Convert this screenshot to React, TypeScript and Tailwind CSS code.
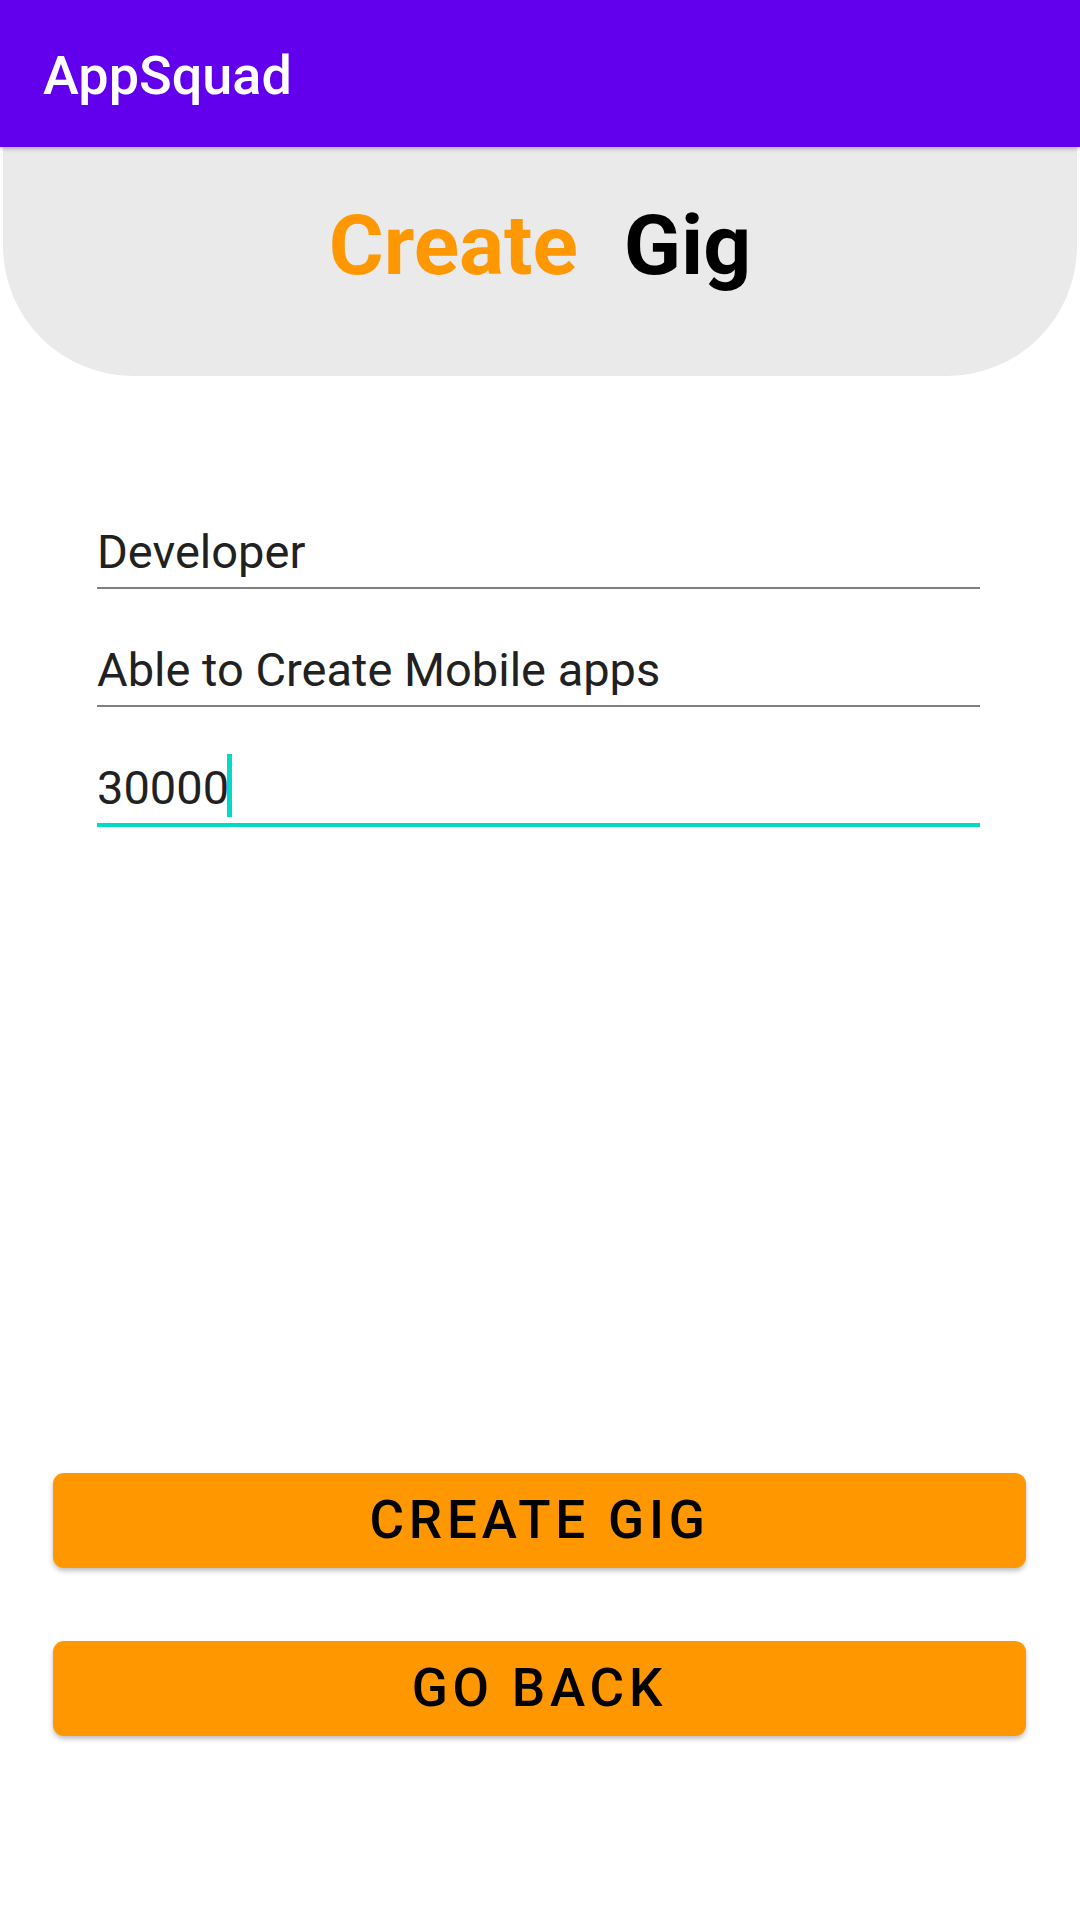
import React from 'react';

const fields = [
    { value: 'Developer', focused: false },
    { value: 'Able to Create Mobile apps', focused: false },
    { value: '30000', focused: true },
];

function Field({ value, focused }: { value: string, focused: boolean }) {
    return (
        <div className={`pb-[12px] ${focused ? 'border-b-[4px] border-[#03DAC5]' : 'border-b-2 border-[#7f7f7f]'}`}>
            <div className="text-[47px] leading-[47px] text-[#212121]">
                <span className="relative">
                    {value}
                    {focused && (
                        <span className="absolute left-full top-[-6px] ml-[-2px] w-[5px] h-[63px] bg-[#03DAC5]" />
                    )}
                </span>
            </div>
        </div>
    );
}

export default function App() {
    return (
        <div className="w-[1080px] h-[1920px] bg-white flex flex-col" style={{ fontFamily: 'Roboto, "Noto Sans", sans-serif' }}>
            {/* Toolbar */}
            <div className="h-[147px] shrink-0 bg-[#6200EE] flex items-center pl-[43px] pt-[5px] shadow-[0_2px_4px_rgba(0,0,0,0.25)] relative z-10">
                <span className="text-white text-[54px] font-medium leading-none">AppSquad</span>
            </div>

            {/* Header card */}
            <div className="mx-[3px] h-[229px] shrink-0 bg-[#EAEAEA] rounded-b-[130px] flex justify-center gap-[46px] pt-[57px]">
                <span className="text-[84px] font-bold leading-[84px] text-[#FF9800]">Create</span>
                <span className="text-[84px] font-bold leading-[84px] text-black">Gig</span>
            </div>

            {/* Form */}
            <div className="flex flex-col gap-[57px] pl-[97px] pr-[100px] mt-[152px]">
                {fields.map((f, i) => (
                    <Field key={i} value={f.value} focused={f.focused} />
                ))}
            </div>

            {/* Actions */}
            <div className="flex flex-col gap-[73px] pl-[53px] pr-[54px] mt-[646px]">
                <button className="h-[95px] rounded-[11px] bg-[#FF9800] shadow-[0_3px_5px_rgba(0,0,0,0.25)] flex items-center justify-center">
                    <span className="text-[53px] font-medium tracking-[0.09em] text-black leading-none">CREATE GIG</span>
                </button>
                <button className="h-[95px] rounded-[11px] bg-[#FF9800] shadow-[0_3px_5px_rgba(0,0,0,0.25)] flex items-center justify-center">
                    <span className="text-[53px] font-medium tracking-[0.09em] text-black leading-none">GO BACK</span>
                </button>
            </div>
        </div>
    );
}
